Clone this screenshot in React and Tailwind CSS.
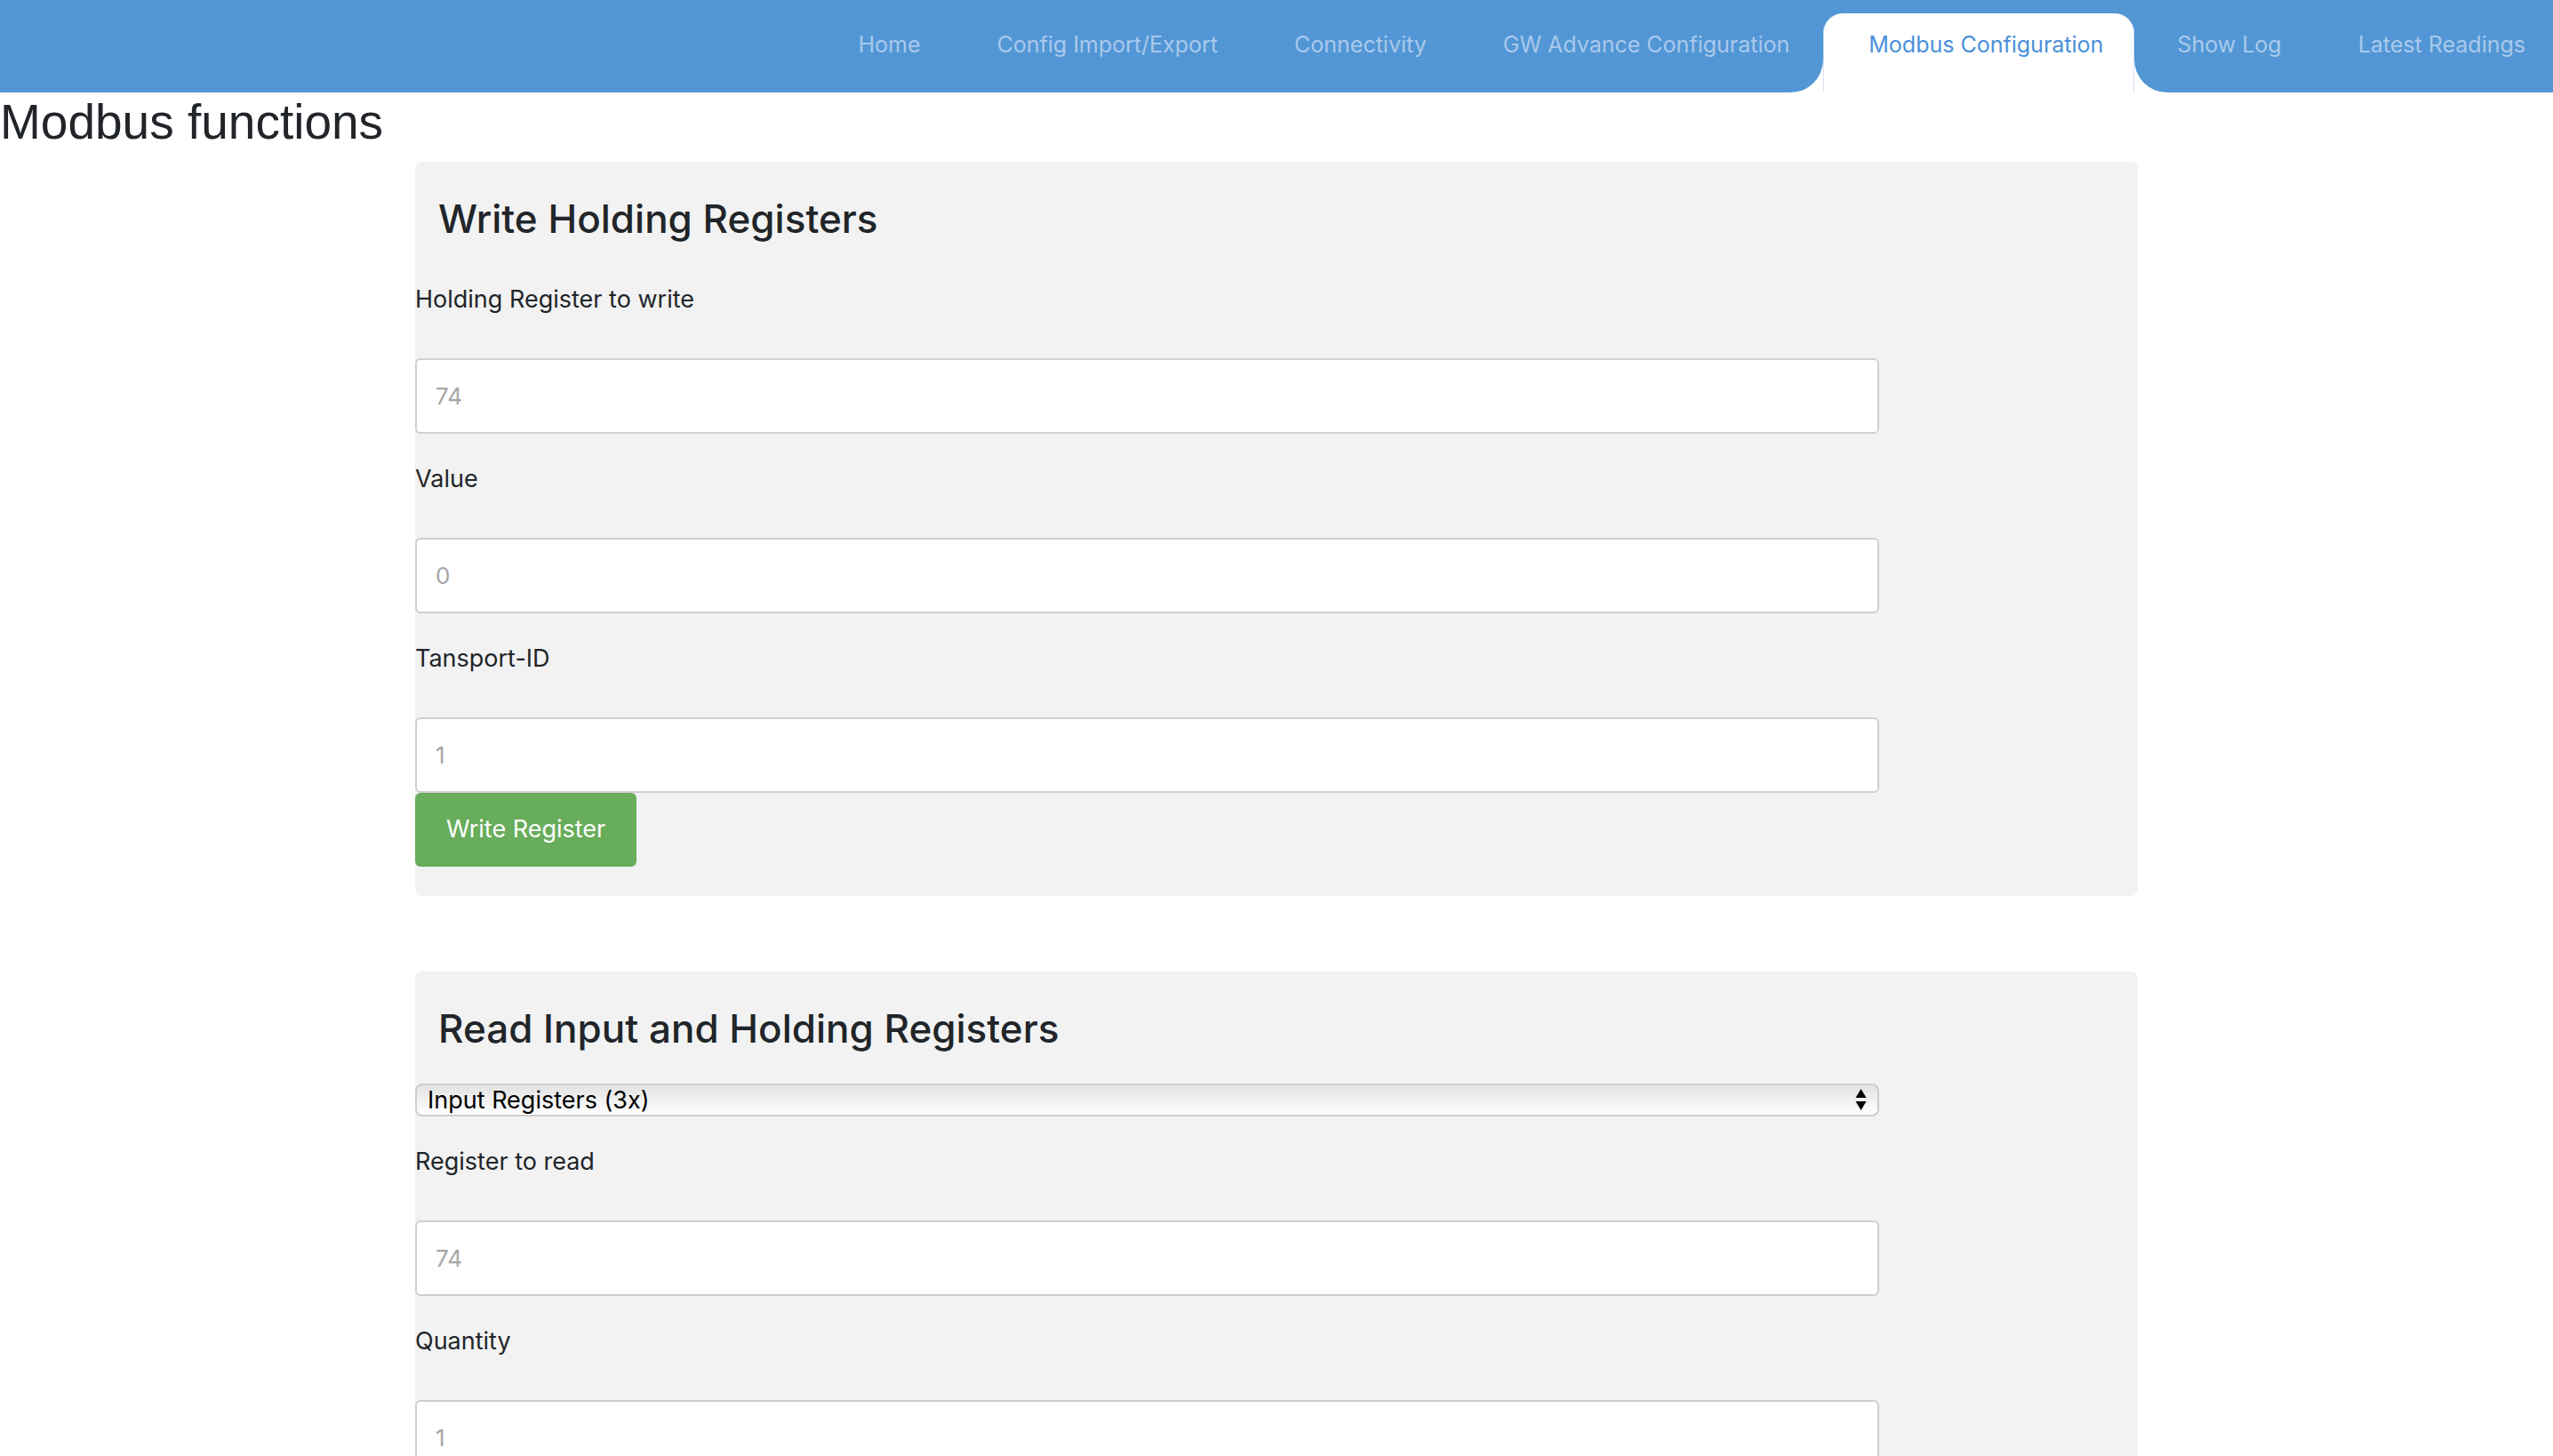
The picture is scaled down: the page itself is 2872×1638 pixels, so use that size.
import React from "react";

const sans = { fontFamily: "Inter, 'Noto Sans', sans-serif" };

function NavItem({ children, className = "" }) {
  return (
    <div className={"flex h-[104px] items-start bg-[#5296d5] pt-[35px] " + className}>
      <span className="text-[25px] leading-[30px] text-[#a9c9ec] whitespace-nowrap">{children}</span>
    </div>
  );
}

function Field({ label, placeholder, first }) {
  return (
    <div className={first ? "mt-[49px]" : "mt-[36px]"}>
      <label className="block text-[27px] leading-[30px] text-[#212529]">{label}</label>
      <input
        placeholder={placeholder}
        className="mt-[51px] block h-[85px] w-[85%] rounded-[6px] border-2 border-[#cfcfcf] bg-white px-[21px] text-[26px] text-[#212529] outline-none placeholder:text-[#a6a6a6]"
        style={sans}
      />
    </div>
  );
}

export default function App() {
  return (
    <div className="min-h-screen bg-white" style={sans}>
      <nav className="flex h-[104px] bg-white">
        <div className="flex-1 bg-[#5296d5]" />
        <NavItem className="pl-[43px] pr-[43px]">Home</NavItem>
        <NavItem className="px-[43px]">Config Import/Export</NavItem>
        <NavItem className="px-[43px]">Connectivity</NavItem>
        <NavItem className="rounded-br-[37px] pl-[43px] pr-[38px]">GW Advance Configuration</NavItem>
        <div className="flex h-[104px] flex-col bg-[#5296d5]">
          <div className="mt-[15px] flex h-[89px] items-start rounded-t-[22px] border-x border-[#d4e3f3] bg-white pl-[50px] pr-[34px] pt-[20px]">
            <span className="text-[25px] leading-[30px] text-[#4a90d9] whitespace-nowrap">Modbus Configuration</span>
          </div>
        </div>
        <NavItem className="rounded-bl-[37px] pl-[48px] pr-[43px]">Show Log</NavItem>
        <NavItem className="pl-[43px] pr-[31px]">Latest Readings</NavItem>
      </nav>

      <h1
        className="mt-[6px] text-[55px] leading-none font-normal text-[#212529]"
        style={{ fontFamily: "'Liberation Sans', Arial, sans-serif" }}
      >
        Modbus functions
      </h1>

      <div className="mt-[17px] flex flex-col items-center gap-[85px]">
        <section className="w-[1938px] rounded-[8px] bg-[#f2f2f2] pt-[38px] pb-[33px]">
          <h2 className="pl-[26px] text-[44px] leading-[1.2] font-medium text-[#212529]">Write Holding Registers</h2>
          <Field first label="Holding Register to write" placeholder="74" />
          <Field label="Value" placeholder="0" />
          <Field label="Tansport-ID" placeholder="1" />
          <button className="block h-[83px] rounded-[6px] bg-[#68ad5c] px-[35px] text-[27px] text-white">
            Write Register
          </button>
        </section>

        <section className="w-[1938px] rounded-[8px] bg-[#f2f2f2] pt-[38px] pb-[33px]">
          <h2 className="pl-[26px] text-[44px] leading-[1.2] font-medium text-[#212529]">Read Input and Holding Registers</h2>
          <div className="mt-[35px] flex h-[37px] w-[85%] items-center justify-between rounded-[8px] border-2 border-[#cdcdcd] bg-gradient-to-b from-[#e3e3e3] to-white pl-[12px] pr-[12px]">
            <span className="text-[27px] leading-none text-black">Input Registers (3x)</span>
            <svg width="13" height="25" viewBox="0 0 13 25">
              <polygon points="6.5,0 12.5,10 0.5,10" fill="#000" />
              <polygon points="0.5,14 12.5,14 6.5,24" fill="#000" />
            </svg>
          </div>
          <div className="mt-[4px]">
            <Field label="Register to read" placeholder="74" />
          </div>
          <Field label="Quantity" placeholder="1" />
          <div className="h-[200px]" />
        </section>
      </div>
    </div>
  );
}
